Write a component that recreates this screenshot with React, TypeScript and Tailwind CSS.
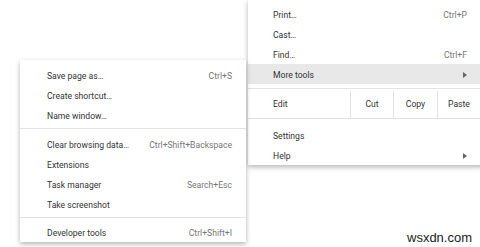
const sub: { label: string; shortcut?: string; sepBefore?: boolean }[] = [
  { label: "Save page as…", shortcut: "Ctrl+S" },
  { label: "Create shortcut…" },
  { label: "Name window…" },
  { label: "Clear browsing data…", shortcut: "Ctrl+Shift+Backspace", sepBefore: true },
  { label: "Extensions" },
  { label: "Task manager", shortcut: "Search+Esc" },
  { label: "Take screenshot" },
  { label: "Developer tools", shortcut: "Ctrl+Shift+I", sepBefore: true },
];

function Arrow() {
  return (
    <svg width="4" height="6" viewBox="0 0 4 6" className="text-[#666]">
      <path d="M0 0 L4 3 L0 6 Z" fill="currentColor" />
    </svg>
  );
}

function MainRow({
  label,
  shortcut,
  arrow,
  active,
}: {
  label: string;
  shortcut?: string;
  arrow?: boolean;
  active?: boolean;
}) {
  return (
    <div
      className={`flex h-[20px] items-center justify-between pl-[25px] pr-[17px] pt-[2px] ${
        active ? "bg-[#e8e8e8]" : ""
      }`}
    >
      <span>{label}</span>
      {shortcut && <span className="text-[#777]">{shortcut}</span>}
      {arrow && <Arrow />}
    </div>
  );
}

export default function App() {
  return (
    <div className="relative h-[247px] w-[480px] overflow-hidden bg-white font-['Roboto',sans-serif] text-[8.6px] text-[#333]">
      {/* main chrome menu */}
      <div className="ml-[248px] w-[236px] bg-white shadow-[0_2px_5px_rgba(0,0,0,0.3)]">
        <div className="pt-[4px]">
          <MainRow label="Print…" shortcut="Ctrl+P" />
          <MainRow label="Cast…" />
          <MainRow label="Find…" shortcut="Ctrl+F" />
          <MainRow label="More tools" arrow active />
        </div>
        <div className="mt-[4px] flex h-[31px] border-y border-[#e3e3e3] pt-[2px]">
          <div className="flex w-[102px] items-center pl-[25px]">Edit</div>
          <div className="flex w-[43px] items-center justify-center border-l border-[#e3e3e3]">Cut</div>
          <div className="flex w-[44px] items-center justify-center border-l border-[#e3e3e3]">Copy</div>
          <div className="flex w-[43px] items-center justify-center border-l border-[#e3e3e3]">Paste</div>
        </div>
        <div className="pt-[6px]">
          <MainRow label="Settings" />
          <MainRow label="Help" arrow />
        </div>
      </div>

      {/* more tools submenu */}
      <div className="absolute left-[20px] top-[60px] w-[226px] bg-white pt-[5px] shadow-[0_2px_5px_rgba(0,0,0,0.3)]">
        {sub.map((item) => (
          <div key={item.label}>
            {item.sepBefore && (
              <div
                className={`border-t border-[#e3e3e3] ${
                  item.label === "Developer tools" ? "mt-[3px] mb-[4px]" : "mt-[3px] mb-[5px]"
                }`}
              />
            )}
            <div className="flex h-[20px] items-center justify-between pl-[27px] pr-[14px] pt-[2px]">
              <span>{item.label}</span>
              {item.shortcut && <span className="text-[#777]">{item.shortcut}</span>}
            </div>
          </div>
        ))}
      </div>

      <div className="absolute left-[407px] top-[228px] font-['Liberation_Sans',sans-serif] text-[13px] text-[#222]">
        wsxdn.com
      </div>
    </div>
  );
}
